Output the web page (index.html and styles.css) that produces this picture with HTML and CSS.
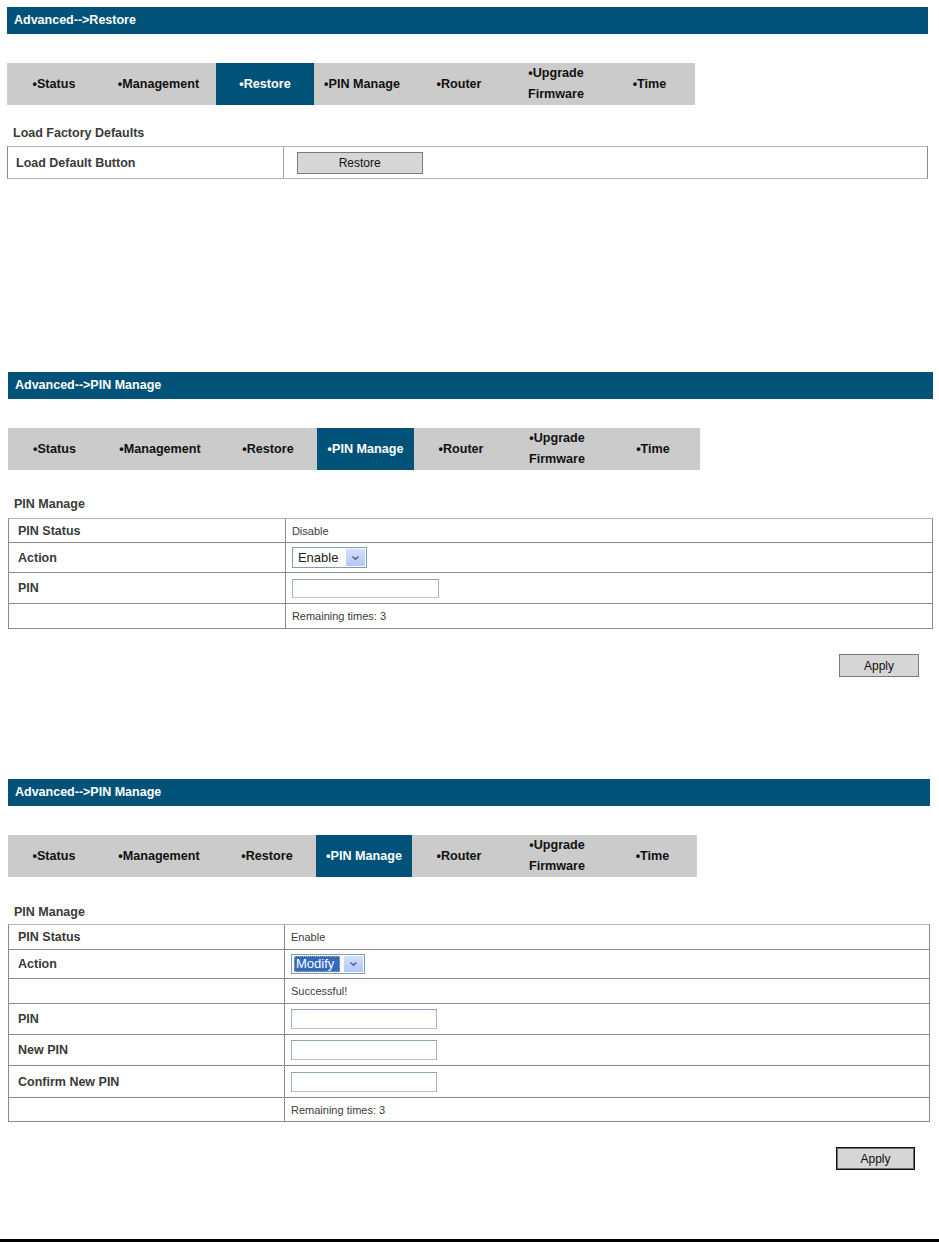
FILE: index.html
```html
<!DOCTYPE html>
<html lang="en">
<head>
<meta charset="utf-8">
<title>Advanced</title>
<link rel="stylesheet" href="styles.css">
</head>
<body>
<section class="panel panel-a">
  <div class="crumb">Advanced--&gt;Restore</div>
  <nav class="tabs tabs-a">
    <span class="tab">•Status</span>
    <span class="tab">•Management</span>
    <span class="tab active">•Restore</span>
    <span class="tab">•PIN Manage</span>
    <span class="tab">•Router</span>
    <span class="tab">•Upgrade<br>Firmware</span>
    <span class="tab">•Time</span>
  </nav>
  <div class="caption cap-a">Load Factory Defaults</div>
  <div class="form form-a">
    <div class="row r-a1"><div class="label lab-a">Load Default Button</div><div class="value val-btn"><button class="btn btn-restore" type="button">Restore</button></div></div>
  </div>
</section>

<section class="panel panel-b">
  <div class="crumb">Advanced--&gt;PIN Manage</div>
  <nav class="tabs tabs-b">
    <span class="tab">•Status</span>
    <span class="tab">•Management</span>
    <span class="tab">•Restore</span>
    <span class="tab active">•PIN Manage</span>
    <span class="tab">•Router</span>
    <span class="tab">•Upgrade<br>Firmware</span>
    <span class="tab">•Time</span>
  </nav>
  <div class="caption cap-b">PIN Manage</div>
  <div class="form form-b">
    <div class="row h23"><div class="label">PIN Status</div><div class="value">Disable</div></div>
    <div class="row h30"><div class="label">Action</div><div class="value">
      <span class="select sel-b"><span class="sel-val">Enable</span><span class="sel-arrow"><svg width="9" height="6" viewBox="0 0 9 6"><polyline points="1.5,1.5 4.5,4.2 7.5,1.5" fill="none" stroke="#4b5e86" stroke-width="1.4"/></svg></span></span>
    </div></div>
    <div class="row h31"><div class="label">PIN</div><div class="value"><input class="field field-b" type="text"></div></div>
    <div class="row h25"><div class="label"></div><div class="value">Remaining times: 3</div></div>
  </div>
  <div class="actions act-b"><button class="btn btn-apply" type="button">Apply</button></div>
</section>

<section class="panel panel-c">
  <div class="crumb">Advanced--&gt;PIN Manage</div>
  <nav class="tabs tabs-c">
    <span class="tab">•Status</span>
    <span class="tab">•Management</span>
    <span class="tab">•Restore</span>
    <span class="tab active">•PIN Manage</span>
    <span class="tab">•Router</span>
    <span class="tab">•Upgrade<br>Firmware</span>
    <span class="tab">•Time</span>
  </nav>
  <div class="caption cap-c">PIN Manage</div>
  <div class="form form-c">
    <div class="row h24"><div class="label">PIN Status</div><div class="value">Enable</div></div>
    <div class="row h29"><div class="label">Action</div><div class="value">
      <span class="select sel-c"><span class="sel-val picked">Modify</span><span class="sel-arrow"><svg width="9" height="6" viewBox="0 0 9 6"><polyline points="1.5,1.5 4.5,4.2 7.5,1.5" fill="none" stroke="#4b5e86" stroke-width="1.4"/></svg></span></span>
    </div></div>
    <div class="row h25"><div class="label"></div><div class="value">Successful!</div></div>
    <div class="row h31"><div class="label">PIN</div><div class="value"><input class="field field-c" type="text"></div></div>
    <div class="row h31"><div class="label">New PIN</div><div class="value"><input class="field field-c" type="text"></div></div>
    <div class="row h32"><div class="label">Confirm New PIN</div><div class="value"><input class="field field-c" type="text"></div></div>
    <div class="row h24"><div class="label"></div><div class="value">Remaining times: 3</div></div>
  </div>
  <div class="actions act-c"><button class="btn btn-apply btn-default" type="button">Apply</button></div>
</section>

<div class="page-rule"></div>
</body>
</html>
```

FILE: styles.css
```css
html, body {
  margin: 0;
  padding: 0;
  background: #ffffff;
}

body {
  font-family: "Liberation Sans", Arial, sans-serif;
  color: #333333;
  overflow: hidden;
}

.panel-a { margin: 7px 0 0 7px; width: 921px; }
.panel-b { margin: 193px 0 0 8px; width: 925px; }
.panel-c { margin: 102px 0 0 8px; width: 922px; }

.crumb {
  height: 27px;
  line-height: 27px;
  background: #015279;
  color: #ffffff;
  font-weight: bold;
  font-size: 12.5px;
  padding-left: 7px;
}

.tabs {
  display: grid;
  height: 42px;
  margin-top: 29px;
  background: #cbcbcb;
}
.tabs-a { width: 688px; grid-template-columns: 94px 115px 98px 96px 98px 96px 91px; }
.tabs-b { width: 692px; grid-template-columns: 93px 118px 98px 97px 94px 98px 94px; }
.tabs-c { width: 689px; grid-template-columns: 92px 118px 98px 96px 94px 102px 89px; }

.tab {
  display: flex;
  align-items: center;
  justify-content: center;
  text-align: center;
  font-weight: bold;
  font-size: 12.6px;
  line-height: 21px;
  color: #111111;
  white-space: nowrap;
}
.tab.active {
  background: #015279;
  color: #ffffff;
}

.caption {
  height: 16px;
  line-height: 16px;
  font-size: 12.5px;
  font-weight: bold;
  color: #3a3a3a;
}
.cap-a { margin-top: 20px; padding-left: 6px; }
.cap-b { margin-top: 26px; padding-left: 6px; }
.cap-c { margin-top: 27px; padding-left: 6px; }

.form {
  border: 1px solid #8a8a8a;
  border-top-color: #b4b4b4;
}
.form-a { margin-top: 5px; border-bottom-color: #b4b4b4; }
.form-b { margin-top: 6px; }
.form-c { margin-top: 4px; }

.row {
  display: grid;
  grid-template-columns: 30% 1fr;
  box-sizing: border-box;
  border-top: 1px solid #8a8a8a;
}
.row:first-child { border-top: 0; }

.r-a1 { height: 31px; }
.h23 { height: 23px; }
.h24 { height: 24px; }
.h25 { height: 25px; }
.h29 { height: 29px; }
.h30 { height: 30px; }
.h31 { height: 31px; }
.h32 { height: 32px; }

.label {
  display: flex;
  align-items: center;
  padding-left: 9px;
  border-right: 1px solid #8a8a8a;
  font-size: 12.5px;
  font-weight: bold;
  color: #3a3a3a;
}
.lab-a { padding-left: 8px; border-right-color: #a0a0a0; }

.value {
  display: flex;
  align-items: center;
  padding-left: 6px;
  font-size: 11px;
  color: #3c3c3c;
}
.val-btn { padding-left: 13px; }

.btn {
  font-family: "Liberation Sans", Arial, sans-serif;
  font-size: 12px;
  color: #111111;
  background: #d6d6d6;
  border: 1px solid #7a7a7a;
  padding: 0;
  margin: 0;
  box-sizing: border-box;
}
.btn-restore { width: 126px; height: 22px; }
.btn-apply { width: 80px; height: 23px; }
.btn-default {
  border: 1px solid #111111;
  box-shadow: inset 0 0 0 1px #6f6f6f;
  width: 79px;
}

.actions {
  display: flex;
  justify-content: flex-end;
  margin-top: 25px;
}
.act-b { padding-right: 14px; }
.act-c { padding-right: 15px; }

.select {
  display: inline-flex;
  align-items: center;
  box-sizing: border-box;
  border: 1px solid #7f9db9;
  background: #ffffff;
  font-size: 13px;
  color: #222222;
}
.sel-b { width: 75px; height: 21px; }
.sel-c { width: 74px; height: 20px; }

.sel-val {
  flex: 1;
  padding-left: 5px;
  line-height: 17px;
}
.sel-c .sel-val { padding-left: 0; margin-left: 2px; }
.picked {
  background: #316ac5;
  color: #ffffff;
  outline: 1px dotted #c9b46a;
  outline-offset: -1px;
  padding-left: 2px !important;
  margin-right: 3px;
  line-height: 16px;
}
.sel-arrow {
  width: 19px;
  height: calc(100% - 2px);
  margin-right: 1px;
  display: flex;
  align-items: center;
  justify-content: center;
  background: linear-gradient(#d3e0fd, #b2c7f6);
  border-left: 1px solid #ffffff;
}

.field {
  box-sizing: border-box;
  border: 1px solid #a4b4c8;
  border-top-color: #8ea3bd;
  border-bottom-color: #b9c5d3;
  background: #ffffff;
  padding: 0;
  margin: 0;
}
.field-b { width: 147px; height: 19px; }
.field-c { width: 146px; height: 20px; }

.page-rule {
  margin-top: 69px;
  height: 3px;
  background: #000000;
}
```
